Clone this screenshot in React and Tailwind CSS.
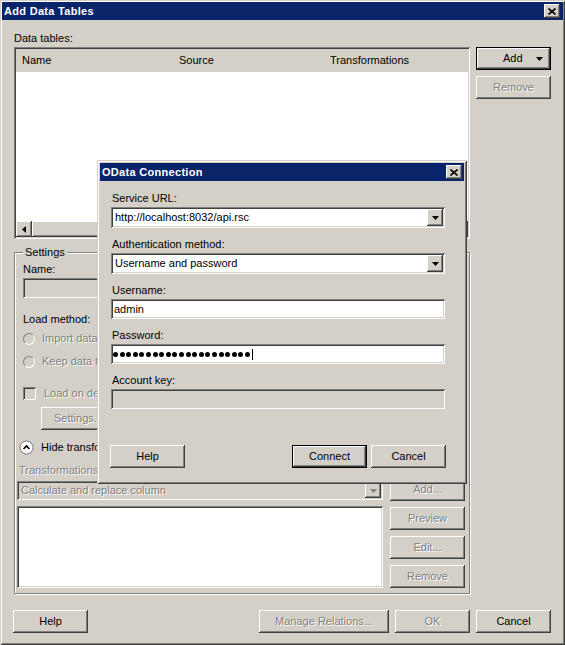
// Classic Windows "Add Data Tables" window with an "OData Connection" dialog over it
const raised =
  "bg-[#d4d0c8] shadow-[inset_-1px_-1px_#404040,inset_1px_1px_#fff,inset_-2px_-2px_#808080,inset_2px_2px_#d4d0c8]";
const raisedDefault =
  "bg-[#d4d0c8] border border-black shadow-[inset_-1px_-1px_#404040,inset_1px_1px_#fff,inset_-2px_-2px_#808080]";
const sunken =
  "shadow-[inset_1px_1px_#808080,inset_-1px_-1px_#fff,inset_2px_2px_#404040,inset_-2px_-2px_#d4d0c8]";
const frame =
  "shadow-[inset_1px_1px_#d4d0c8,inset_-1px_-1px_#404040,inset_2px_2px_#fff,inset_-2px_-2px_#808080]";
const grayText = "text-[#808080] [text-shadow:1px_1px_0_#fff]";

function Button({ children, disabled, primary, width = "w-[75px]", className = "" }) {
  return (
    <div
      className={`flex h-[23px] shrink-0 items-center justify-center ${width} ${
        primary ? raisedDefault : raised
      } ${disabled ? grayText : ""} ${className}`}
    >
      {children}
    </div>
  );
}

function CloseButton() {
  return (
    <div className={`flex h-[14px] w-[16px] items-center justify-center ${raised}`}>
      <svg width="8" height="7" viewBox="0 0 8 7">
        <path d="M0.5 0.5L7.5 6.5M7.5 0.5L0.5 6.5" stroke="#000" strokeWidth="1.6" />
      </svg>
    </div>
  );
}

function TitleBar({ title, className = "" }) {
  return (
    <div className={`flex h-[18px] items-center justify-between bg-[#0a246a] pl-[2px] ${className}`}>
      <span className="font-bold tracking-[0.3px] text-white">{title}</span>
      <CloseButton />
    </div>
  );
}

function DropArrow({ disabled, height = "h-[17px]" }) {
  return (
    <div className={`flex w-[16px] shrink-0 items-center justify-center ${height} ${raised}`}>
      <svg width="7" height="4" viewBox="0 0 7 4">
        <path d="M0 0H7L3.5 4Z" fill={disabled ? "#808080" : "#000"} />
      </svg>
    </div>
  );
}

function ScrollArrow({ left }) {
  return (
    <div className={`flex h-[16px] w-[16px] shrink-0 items-center justify-center ${raised}`}>
      <svg width="4" height="7" viewBox="0 0 4 7">
        <path d={left ? "M4 0V7L0 3.5Z" : "M0 0V7L4 3.5Z"} fill="#000" />
      </svg>
    </div>
  );
}

function ListView() {
  return (
    <div className={`flex h-[192px] w-[456px] shrink-0 flex-col bg-white p-[2px] ${sunken}`}>
      <div className="flex h-[23px] items-center bg-[#d4d0c8]">
        <span className="ml-[6px] w-[157px]">Name</span>
        <span className="w-[151px]">Source</span>
        <span>Transformations</span>
      </div>
      <div className="flex-1" />
      <div className="flex h-[16px]">
        <ScrollArrow left />
        <div className={`flex-1 ${raised}`} />
        <ScrollArrow />
      </div>
    </div>
  );
}

function Radio({ label }) {
  return (
    <div className="flex h-[13px] items-center gap-[7px]">
      <span className="h-[12px] w-[12px] rounded-full border border-t-[#808080] border-l-[#808080] border-r-[#fff] border-b-[#fff] bg-[#d4d0c8]" />
      <span className={`whitespace-nowrap ${grayText}`}>{label}</span>
    </div>
  );
}

function Field({ children, disabled, className = "" }) {
  return (
    <div
      className={`mt-[2px] flex h-[20px] w-[334px] items-center pl-[3px] ${sunken} ${
        disabled ? "bg-[#d4d0c8]" : "bg-white"
      } ${className}`}
    >
      {children}
    </div>
  );
}

function Combo({ value }) {
  return (
    <div className={`mt-[2px] flex h-[21px] w-[334px] items-center bg-white pl-[4px] pr-[2px] ${sunken}`}>
      <span className="flex-1 truncate">{value}</span>
      <DropArrow />
    </div>
  );
}

function ODataDialog() {
  const dots = Array.from({ length: 21 });
  return (
    <div className={`absolute left-[97px] top-[160px] h-[324px] w-[370px] bg-[#d4d0c8] p-[3px] ${frame}`}>
      <TitleBar title="OData Connection" className="pr-[2px]" />
      <div className="pl-[11px]">
        <div className="mt-[11px] h-[13px] pl-[1px]">Service URL:</div>
        <Combo value="http://localhost:8032/api.rsc" />
        <div className="mt-[10px] h-[13px] pl-[1px]">Authentication method:</div>
        <Combo value="Username and password" />
        <div className="mt-[10px] h-[13px] pl-[1px]">Username:</div>
        <Field>admin</Field>
        <div className="mt-[10px] h-[13px] pl-[1px]">Password:</div>
        <Field className="!pl-[2px]">
          <div className="flex items-center gap-[1.6px]">
            {dots.map((_, i) => (
              <span key={i} className="h-[5px] w-[5px] rounded-full bg-black" />
            ))}
          </div>
          <span className="ml-[2px] h-[11px] w-[1px] bg-black" />
        </Field>
        <div className="mt-[10px] h-[13px] pl-[1px]">Account key:</div>
        <Field disabled />
        <div className="mt-[36px] flex">
          <Button className="-ml-[1px]">Help</Button>
          <Button primary className="ml-[107px]">
            Connect
          </Button>
          <Button className="ml-[4px]">Cancel</Button>
        </div>
      </div>
    </div>
  );
}

export default function App() {
  return (
    <div
      className={`relative h-[645px] w-[565px] overflow-hidden bg-[#d4d0c8] font-['Liberation_Sans',Arial,sans-serif] text-[11px] leading-[13px] text-black ${frame}`}
    >
      <TitleBar title="Add Data Tables" className="mx-[2px] mt-[2px] pr-[3px]" />

      <div className="pl-[14px] pr-[14px]">
        <div className="mt-[12px] h-[13px]">Data tables:</div>

        <div className="mt-[2px] flex gap-[6px]">
          <ListView />
          <div className="flex flex-col gap-[6px]">
            <Button primary className="!justify-start pl-[26px]">
              <span>Add</span>
              <svg className="ml-[13px]" width="7" height="4" viewBox="0 0 7 4">
                <path d="M0 0H7L3.5 4Z" fill="#000" />
              </svg>
            </Button>
            <Button disabled>Remove</Button>
          </div>
        </div>

        {/* Settings group */}
        <fieldset className="mt-[7px] w-[456px] border border-[#808080] pb-[5px] shadow-[1px_1px_0_#fff,inset_1px_1px_0_#fff]">
          <legend className="ml-[8px] bg-[#d4d0c8] px-[2px] leading-[13px]">Settings</legend>

          <div className="pl-[8px]">
            <div className="mt-[4px] h-[13px]">Name:</div>
            <div className={`mt-[2px] h-[20px] w-[360px] bg-[#d4d0c8] ${sunken}`} />
            <div className="mt-[15px] h-[13px]">Load method:</div>
            <div className="mt-[6px]">
              <Radio label="Import data table" />
            </div>
            <div className="mt-[10px]">
              <Radio label="Keep data table external" />
            </div>
            <div className="mt-[19px] flex h-[13px] items-center gap-[8px]">
              <span className={`h-[13px] w-[13px] bg-[#d4d0c8] ${sunken}`} />
              <span className={`whitespace-nowrap ${grayText}`}>Load on demand</span>
            </div>
            <Button disabled className="ml-[18px] mt-[7px]">
              Settings...
            </Button>
          </div>

          <div className="pl-[2px] pr-[4px]">
            <div className="ml-[2px] mt-[10px] flex h-[15px] items-center gap-[7px]">
              <svg width="15" height="15" viewBox="0 0 15 15">
                <circle cx="7.5" cy="7.5" r="6.5" fill="#fff" stroke="#7a7a7a" />
                <path d="M4.5 9L7.5 6L10.5 9" fill="none" stroke="#000" strokeWidth="1.6" />
              </svg>
              <span>Hide transformations</span>
            </div>
            <div className={`ml-[2px] mt-[9px] h-[13px] ${grayText}`}>Transformations:</div>
            <div className="mt-[1px] flex gap-[7px]">
              <div className="w-[366px]">
                <div className={`mt-[3px] flex h-[19px] items-center bg-[#d4d0c8] pl-[4px] pr-[2px] ${sunken}`}>
                  <span className={`flex-1 truncate ${grayText}`}>Calculate and replace column</span>
                  <DropArrow disabled height="h-[15px]" />
                </div>
                <div className={`mt-[6px] h-[82px] bg-white ${sunken}`} />
              </div>
              <div className="flex flex-col gap-[6px]">
                <Button disabled>Add...</Button>
                <Button disabled>Preview</Button>
                <Button disabled>Edit...</Button>
                <Button disabled>Remove</Button>
              </div>
            </div>
          </div>
        </fieldset>

        <div className="mt-[16px] flex gap-[6px]">
          <Button className="-ml-[1px]">Help</Button>
          <Button disabled width="w-[130px]" className="ml-auto">
            Manage Relations...
          </Button>
          <Button disabled>OK</Button>
          <Button>Cancel</Button>
        </div>
      </div>

      <ODataDialog />
    </div>
  );
}
